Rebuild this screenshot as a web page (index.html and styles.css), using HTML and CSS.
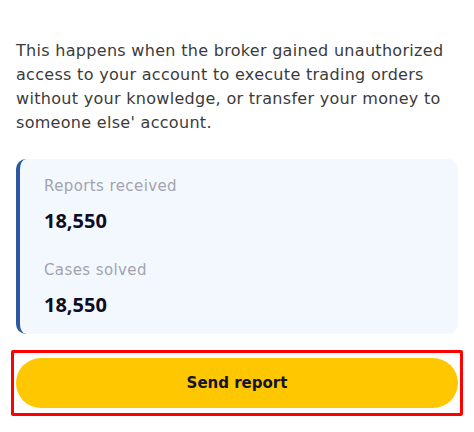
FILE: index.html
```
<!DOCTYPE html>
<html>
<head>
<meta charset="utf-8">
<link rel="stylesheet" href="styles.css">
</head>
<body>
<div class="page">
  <p class="intro">This happens when the broker gained unauthorized access to your account to execute trading orders without your knowledge, or transfer your money to someone else' account.</p>
  <div class="stats">
    <div class="stat">
      <div class="label">Reports received</div>
      <div class="value">18,550</div>
    </div>
    <div class="stat">
      <div class="label">Cases solved</div>
      <div class="value">18,550</div>
    </div>
  </div>
  <div class="highlight">
    <button class="send">Send report</button>
  </div>
</div>
</body>
</html>
```
FILE: styles.css
```
html, body {
  margin: 0;
  padding: 0;
  background: #ffffff;
}
.page {
  padding: 39px 16px 0 16px;
  font-family: "DejaVu Sans", sans-serif;
}
.intro {
  margin: 0;
  font-size: 16px;
  line-height: 24px;
  color: #3b3b3b;
  letter-spacing: 0.3px;
}
.stats {
  margin-top: 24px;
  background: #f3f8ff;
  border-left: 4px solid #2b58a0;
  border-radius: 10px;
  padding: 17px 24px 17px 24px;
  display: flex;
  flex-direction: column;
  gap: 27px;
}
.stat {
  display: flex;
  flex-direction: column;
  gap: 13px;
}
.label {
  font-size: 15px;
  line-height: 20px;
  color: #a3a3ad;
  letter-spacing: 0.4px;
}
.value {
  font-family: "Open Sans", sans-serif;
  font-size: 20px;
  line-height: 24px;
  font-weight: 700;
  color: #0d0d26;
}
.highlight {
  margin: 16px -5px 0 -5px;
  border: 3px solid #ff0000;
  border-radius: 2px;
  padding: 5px 2px;
}
.send {
  display: block;
  width: 100%;
  height: 50px;
  border: none;
  border-radius: 25px;
  background: #ffc700;
  color: #14142b;
  font-family: "DejaVu Sans", sans-serif;
  font-weight: bold;
  font-size: 15px;
}
```
